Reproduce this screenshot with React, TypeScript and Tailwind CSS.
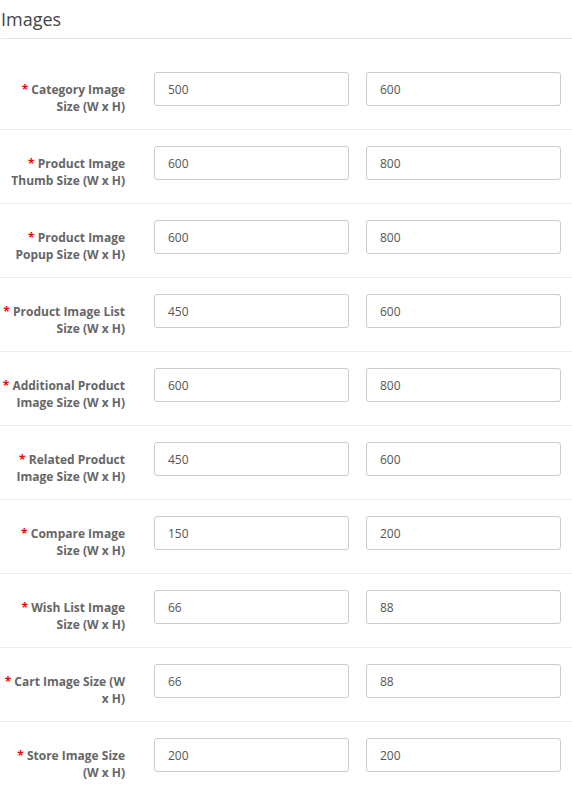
import React from "react";

const rows: { label: string; w: string; h: string }[] = [
  { label: "Category Image Size (W x H)", w: "500", h: "600" },
  { label: "Product Image Thumb Size (W x H)", w: "600", h: "800" },
  { label: "Product Image Popup Size (W x H)", w: "600", h: "800" },
  { label: "Product Image List Size (W x H)", w: "450", h: "600" },
  { label: "Additional Product Image Size (W x H)", w: "600", h: "800" },
  { label: "Related Product Image Size (W x H)", w: "450", h: "600" },
  { label: "Compare Image Size (W x H)", w: "150", h: "200" },
  { label: "Wish List Image Size (W x H)", w: "66", h: "88" },
  { label: "Cart Image Size (W x H)", w: "66", h: "88" },
  { label: "Store Image Size (W x H)", w: "200", h: "200" },
];

function Input({ value }: { value: string }) {
  return (
    <input
      type="text"
      defaultValue={value}
      className="h-[34px] w-[195px] rounded-[3px] border border-[#cccccc] bg-white px-[13px] text-[12px] text-[#555555] outline-none"
      style={{ fontFamily: '"Open Sans", sans-serif' }}
    />
  );
}

export default function App() {
  return (
    <div
      className="w-[572px] h-[796px] overflow-hidden bg-white"
      style={{ fontFamily: '"Open Sans", sans-serif' }}
    >
      <div className="ml-[1px] h-[39px] border-b border-[#e5e5e5] pt-[7px] text-[18px] leading-[25px] text-[#444444]">
        Images
      </div>
      <div className="mt-[17px]">
        {rows.map((r, i) => (
          <div
            key={i}
            className={
              "flex items-start pb-[14px] pt-[16px] " +
              (i === 0 ? "" : "border-t border-[#ededed]")
            }
          >
            <label className="w-[125px] shrink-0 pt-[9px] text-right text-[12px] font-bold leading-[17px] text-[#666666]">
              <span className="text-[#ff0000]">*</span> {r.label}
            </label>
            <div className="ml-[29px] flex gap-[17px]">
              <Input value={r.w} />
              <Input value={r.h} />
            </div>
          </div>
        ))}
      </div>
    </div>
  );
}
